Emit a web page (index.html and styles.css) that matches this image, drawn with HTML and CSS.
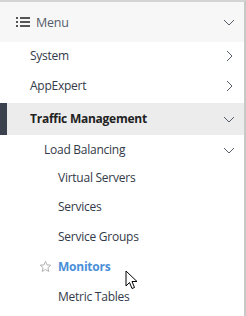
FILE: index.html
```html
<!DOCTYPE html>
<html lang="en">
<head>
    <meta charset="UTF-8">
    <title>Menu</title>
    <link rel="stylesheet" href="styles.css">
</head>
<body>
    <nav class="sidebar">
        <div class="menu-head">
            <span class="menu-title">
                <svg class="list-icon" width="14" height="10" viewBox="0 0 14 10">
                    <rect x="0" y="0" width="2" height="2" fill="#555"/>
                    <rect x="4" y="0" width="10" height="2" fill="#555"/>
                    <rect x="0" y="4" width="2" height="2" fill="#555"/>
                    <rect x="4" y="4" width="10" height="2" fill="#555"/>
                    <rect x="0" y="8" width="2" height="2" fill="#555"/>
                    <rect x="4" y="8" width="10" height="2" fill="#555"/>
                </svg>
                Menu
            </span>
            <svg class="chev" width="12" height="12" viewBox="0 0 12 12"><path d="M1 4 L6 9 L11 4" fill="none" stroke="#555c6a" stroke-width="1"/></svg>
        </div>

        <div class="item lvl1"><span>System</span>
            <svg class="chev" width="12" height="12" viewBox="0 0 12 12"><path d="M4 1 L9 6 L4 11" fill="none" stroke="#555c6a" stroke-width="1"/></svg>
        </div>
        <div class="item lvl1"><span>AppExpert</span>
            <svg class="chev" width="12" height="12" viewBox="0 0 12 12"><path d="M4 1 L9 6 L4 11" fill="none" stroke="#555c6a" stroke-width="1"/></svg>
        </div>
        <div class="item lvl1 active"><span>Traffic Management</span>
            <svg class="chev" width="12" height="12" viewBox="0 0 12 12"><path d="M1 4 L6 9 L11 4" fill="none" stroke="#555c6a" stroke-width="1"/></svg>
        </div>
        <div class="item lvl2"><span>Load Balancing</span>
            <svg class="chev" width="12" height="12" viewBox="0 0 12 12"><path d="M1 4 L6 9 L11 4" fill="none" stroke="#555c6a" stroke-width="1"/></svg>
        </div>
        <div class="item lvl3 first"><span>Virtual Servers</span></div>
        <div class="item lvl3"><span>Services</span></div>
        <div class="item lvl3"><span>Service Groups</span></div>
        <div class="item lvl3 selected">
            <svg class="star" width="13" height="13" viewBox="0 0 24 24">
                <path d="M12 2.5 L14.8 9 L21.8 9.6 L16.5 14.2 L18.1 21.1 L12 17.4 L5.9 21.1 L7.5 14.2 L2.2 9.6 L9.2 9 Z" fill="none" stroke="#b0b0b0" stroke-width="1.8" stroke-linejoin="round"/>
            </svg>
            <span>Monitors</span>
            <svg class="cursor" width="14" height="21" viewBox="0 0 14 21">
                <path d="M1 1 L1 16 L4.5 12.5 L7 18.5 L9.5 17.5 L7 11.5 L12 11.5 Z" fill="#fff" stroke="#000" stroke-width="1" stroke-linejoin="round"/>
            </svg>
        </div>
        <div class="item lvl3"><span>Metric Tables</span></div>
    </nav>
</body>
</html>
```

FILE: styles.css
```css
body {
    margin: 0;
    background: #fff;
    font-family: 'Open Sans', 'Noto Sans', sans-serif;
}

.sidebar {
    width: 244px;
    height: 314px;
    border-top: 2px solid #d4d4d4;
    border-right: 2px solid #c8c8c8;
    overflow: hidden;
}

.menu-head {
    display: flex;
    align-items: center;
    justify-content: space-between;
    height: 40px;
    padding: 0 9px 0 16px;
    background: #f7f7f7;
    color: #555c6a;
    font-size: 12.5px;
    letter-spacing: -0.2px;
}

.menu-title {
    display: flex;
    align-items: center;
    gap: 6px;
}

.item {
    display: flex;
    align-items: center;
    justify-content: space-between;
    box-sizing: border-box;
    height: 30px;
    padding-right: 9px;
    padding-bottom: 4px;
    font-size: 12px;
    letter-spacing: -0.25px;
    color: #333a48;
}

.item .chev {
    margin-top: 2px;
}

.lvl1 {
    padding-left: 30px;
}

.active {
    height: 32px;
    margin-top: 1px;
    padding-left: 23px;
    padding-bottom: 1px;
    border-left: 7px solid #3b414d;
    background: #ececec;
    font-weight: 700;
    color: #222;
}

.active .chev {
    margin-top: 0;
}

.lvl2 {
    height: 32px;
    padding-left: 44px;
}

.lvl3 {
    justify-content: flex-start;
    padding-left: 58px;
}

.lvl3.first {
    height: 24px;
    margin-bottom: 2px;
}

.selected {
    position: relative;
    padding-left: 39px;
    color: #4a8fd8;
    font-weight: 700;
}

.star {
    margin-right: 6px;
}

.cursor {
    position: absolute;
    left: 125px;
    top: 17px;
}
```
